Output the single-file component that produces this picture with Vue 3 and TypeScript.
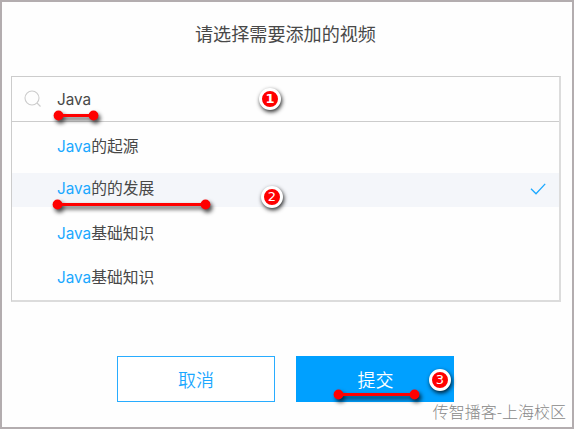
<script setup lang="ts">
import { ref } from 'vue'

interface Video {
  id: number
  name: string
}

const keyword = ref('Java')
const selectedId = ref(2)

const videos = ref<Video[]>([
  { id: 1, name: '的起源' },
  { id: 2, name: '的的发展' },
  { id: 3, name: '基础知识' },
  { id: 4, name: '基础知识' },
])

const marks = [
  { x: 58, y: 115, width: 35 },
  { x: 57, y: 204, width: 148 },
  { x: 338, y: 394, width: 76 },
]

const steps = [
  { x: 269, y: 99 },
  { x: 271, y: 197 },
  { x: 439, y: 380 },
]
</script>

<template>
  <main class="dialog">
    <h2 class="title">请选择需要添加的视频</h2>

    <section class="picker">
      <div class="search">
        <svg class="search-icon" width="18" height="18" viewBox="0 0 18 18">
          <circle cx="8" cy="8" r="7" />
          <path d="M13 13 L16.5 16.5" />
        </svg>
        <span class="keyword">{{ keyword }}</span>
      </div>
      <ul class="list">
        <li
          v-for="item in videos"
          :key="item.id"
          class="item"
          :class="{ active: item.id === selectedId }"
          @click="selectedId = item.id"
        >
          <span class="name"><em>{{ keyword }}</em>{{ item.name }}</span>
          <svg v-if="item.id === selectedId" class="check" width="16" height="12" viewBox="0 0 16 12">
            <path d="M1 5.8 L6 10.7 L15.2 0.9" />
          </svg>
        </li>
      </ul>
    </section>

    <div class="actions">
      <button class="btn">取消</button>
      <button class="btn primary">提交</button>
    </div>

    <svg class="marks" width="574" height="429" viewBox="0 0 574 429">
      <g v-for="(m, i) in marks" :key="i">
        <path :d="`M${m.x + 0.5} ${m.y + 0.5} h${m.width}`" />
        <circle :cx="m.x + 0.5" :cy="m.y + 0.5" r="4.9" />
        <circle :cx="m.x + m.width + 0.5" :cy="m.y + 0.5" r="4.9" />
      </g>
    </svg>
    <span
      v-for="(s, i) in steps"
      :key="i"
      class="step"
      :class="{ first: i === 0 }"
      :style="{ left: s.x - 12 + 'px', top: s.y - 13 + 'px' }"
    >{{ i + 1 }}</span>
    <span class="watermark">传智播客-上海校区</span>
  </main>
</template>

<style>
body {
  margin: 0;
}
</style>

<style scoped>
.dialog {
  position: relative;
  box-sizing: border-box;
  width: 574px;
  height: 429px;
  padding: 0 11px 0 9px;
  border: 2px solid #b3adaf;
  background: #fefefe;
  overflow: hidden;
  font-family: "Noto Sans CJK SC", sans-serif;
  color: #484848;
}
.title {
  margin: 19px 1px 30px 0;
  height: 25px;
  line-height: 25px;
  font-size: 18.1px;
  font-weight: 400;
  text-align: center;
}
.picker {
  box-sizing: border-box;
  width: 550px;
  height: 226px;
  border: 1px solid #ccc;
  border-right: 2px solid #dcdcdc;
  border-bottom: 2px solid #dcdcdc;
}
.search {
  display: flex;
  align-items: center;
  height: 44px;
  padding-left: 12px;
  border-bottom: 1px solid #ccc;
}
.search-icon {
  fill: none;
  stroke: #ccc;
  stroke-width: 1.1;
}
.keyword {
  margin-left: 15px;
  font-family: Inter, sans-serif;
  font-size: 15.3px;
}
.list {
  display: flex;
  flex-direction: column;
  gap: 9.4px;
  margin: 0;
  padding: 8px 0 0;
  list-style: none;
}
.item {
  display: flex;
  align-items: center;
  justify-content: space-between;
  box-sizing: border-box;
  height: 34px;
  padding: 0 13px 0 45px;
  font-size: 15.8px;
  line-height: 24px;
  cursor: pointer;
}
.item:first-child {
  padding-bottom: 1px;
}
.item:last-child {
  padding-top: 1px;
}
.item.active {
  padding-bottom: 4px;
  background: #f4f6fa;
}
.name em {
  font-family: Inter, sans-serif;
  font-size: 15.3px;
  font-style: normal;
  color: #1ba8ff;
}
.check {
  margin-top: 1px;
  fill: none;
  stroke: #1ba8ff;
  stroke-width: 1.3;
}
.actions {
  display: flex;
  gap: 21px;
  margin: 54px 0 0 106px;
}
.btn {
  box-sizing: border-box;
  width: 158px;
  height: 46px;
  padding: 0;
  border: 1px solid #28acff;
  background: #fff;
  color: #1ba8ff;
  font-family: inherit;
  font-size: 18px;
  font-weight: 350;
}
.btn.primary {
  padding-left: 1px;
  border-color: #00a0ff;
  background: #00a0ff;
  color: #fff;
}
.marks {
  position: absolute;
  left: -2px;
  top: -2px;
  pointer-events: none;
  fill: #f00;
  filter: drop-shadow(2px 3px 2px rgba(0, 0, 0, 0.75));
}
.marks path {
  stroke: #f00;
  stroke-width: 3;
}
.step {
  position: absolute;
  box-sizing: border-box;
  width: 22px;
  height: 22px;
  border: 3px solid #fff;
  border-radius: 50%;
  background: #f00;
  box-shadow: 1px 2px 4px rgba(0, 0, 0, 0.85);
  color: #fff;
  font: 13px/16px "DejaVu Sans", sans-serif;
  text-align: center;
}
.step.first {
  font-weight: bold;
}
.watermark {
  position: absolute;
  right: 6px;
  bottom: 4px;
  font-size: 16px;
  line-height: 24px;
  font-weight: 300;
  color: #888;
}
</style>
